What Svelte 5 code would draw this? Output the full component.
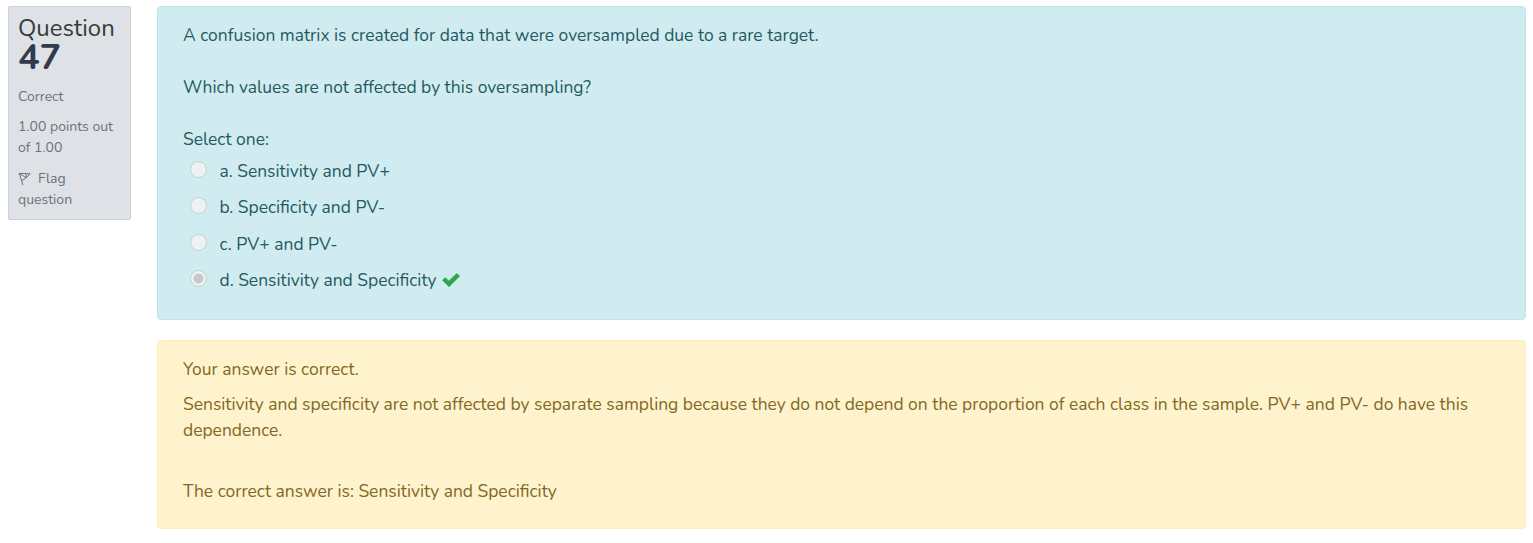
<script>
  const options = [
    { letter: 'a', text: 'Sensitivity and PV+' },
    { letter: 'b', text: 'Specificity and PV-' },
    { letter: 'c', text: 'PV+ and PV-' },
    { letter: 'd', text: 'Sensitivity and Specificity', chosen: true }
  ];
</script>

<main>
  <aside>
    <h3><span class="word">Question</span><span class="number">47</span></h3>
    <div class="state">Correct</div>
    <div class="grade">1.00 points out<br />of 1.00</div>
    <div class="flag">
      <svg width="14" height="15" viewBox="0 0 14 15" aria-hidden="true">
        <path d="M1.2 2 4.9 14.2M1.4 2.4 12.2 2.8 8.2 6.7 3.8 9.6M1.4 2.4 8.2 6.7V3" fill="none" stroke="#6d7277" stroke-width="1" stroke-linejoin="round" />
      </svg><span>Flag</span><br />question
    </div>
  </aside>
  <div class="content">
    <section class="formulation">
      <p>A confusion matrix is created for data that were oversampled due to a rare target.</p>
      <p>Which values are not affected by this oversampling?</p>
      <div class="prompt">Select one:</div>
      <div class="answers">
        {#each options as option}
          <div class="option">
            <i class="radio" class:chosen={option.chosen}></i>
            <span>{option.letter}. {option.text}</span>
            {#if option.chosen}
              <svg class="check" width="18" height="14" viewBox="0 0 18 14" aria-hidden="true">
                <path d="M0.3 7.3 3.2 4.4 7 7.7 14.7.2 17.9 3.1 7 13.9Z" fill="#2fa84c" stroke="#2fa84c" stroke-width=".3" />
              </svg>
            {/if}
          </div>
        {/each}
      </div>
    </section>
    <section class="feedback">
      <div class="verdict">Your answer is correct.</div>
      <div class="reason">Sensitivity and specificity are not affected by separate sampling because they do not depend on the proportion of each class in the sample. PV+ and PV- do have this<br />dependence.</div>
      <div>The correct answer is: Sensitivity and Specificity</div>
    </section>
  </div>
</main>

<style>
  :global(body) { background: #fff; }
  main {
    display: flex;
    align-items: flex-start;
    gap: 26px;
    padding: 6px 7px 0 8px;
    font: 400 17.46px/26px Nunito, "Open Sans", sans-serif;
    white-space: nowrap;
  }
  aside {
    box-sizing: border-box;
    width: 123px;
    height: 214px;
    padding: 8px 9px;
    border: 1px solid #cad0d7;
    border-radius: 2px;
    background: #dee2e6;
    color: #6a737b;
    font-size: 14px;
    line-height: 21px;
  }
  h3 { margin: 0; color: #373a3c; font-weight: 400; }
  .word { display: block; font-size: 23.9px; line-height: 27px; }
  .number { display: block; font-size: 36px; line-height: 31px; font-weight: 700; color: #313b4d; }
  .state { margin-top: 13px; }
  .grade { margin-top: 9px; }
  .flag { margin-top: 10px; }
  .flag svg { margin-right: 6px; vertical-align: -3px; }
  .content { flex: 1; min-width: 0; }
  section { box-sizing: border-box; padding: 15px 25px; border: 1px solid; border-radius: 4px; }
  .formulation { height: 314px; color: #24595f; background: #d1ecf1; border-color: #bee5eb; }
  .feedback { height: 189px; margin-top: 20px; color: #816824; background: #fff3cd; border-color: #ffeeba; }
  p { margin: 0 0 26px; }
  .answers { margin-top: 6px; }
  .option { display: flex; align-items: center; height: 26px; margin-bottom: 10.4px; padding-left: 7px; }
  .radio {
    box-sizing: border-box;
    width: 17px;
    height: 17px;
    margin: -3px 12.5px 0 0;
    border: 1px solid #c3cfd2;
    border-radius: 50%;
    background: #edf2f3;
  }
  .radio.chosen { background: radial-gradient(circle, #c6c8c9 0 4.5px, #edf2f3 5.3px); }
  .check { margin: 0 0 0 5px; }
  .reason { margin: 9px 0 35px; }
</style>
